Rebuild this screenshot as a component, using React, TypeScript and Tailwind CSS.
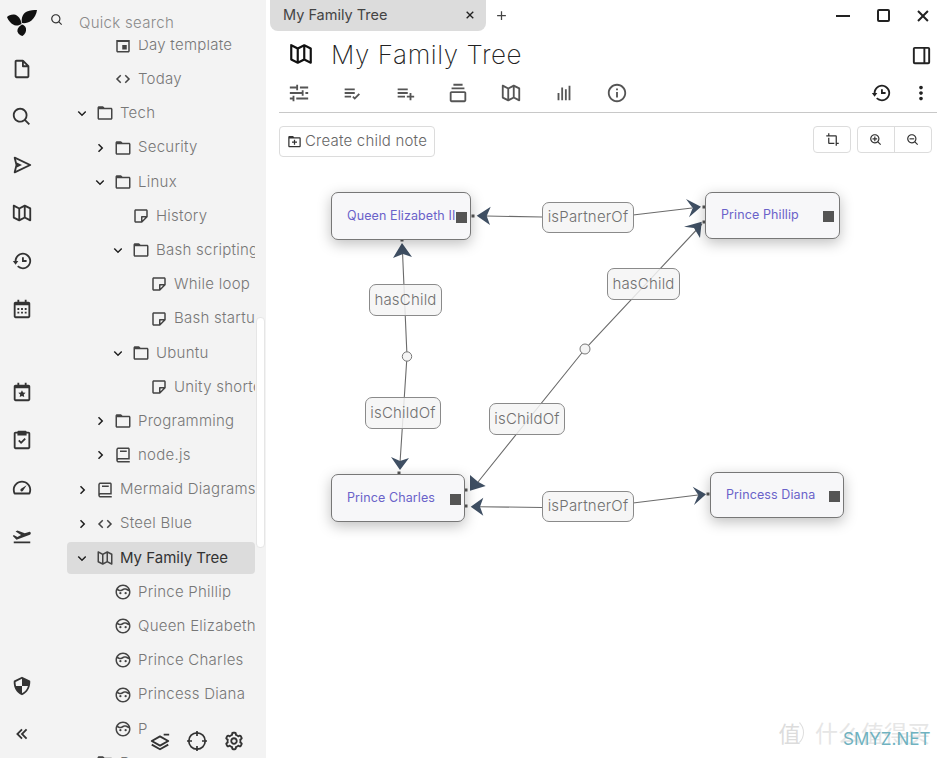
import React from "react";
import {
  BiFileBlank, BiSearch, BiSend, BiMapAlt, BiHistory, BiCalendar, BiCalendarStar, BiTask, BiTachometer,
  BiSolidPlaneTakeOff, BiShieldQuarter, BiChevronsLeft, BiLayerMinus, BiCog, BiFolder, BiNote, BiBook, BiCode,
  BiChevronDown, BiChevronRight, BiFace, BiCalendarEvent, BiSlider, BiListCheck, BiListPlus, BiCollection, BiBarChart,
  BiInfoCircle, BiDockRight, BiDotsVerticalRounded, BiCrop, BiZoomIn, BiZoomOut, BiFolderPlus, BiMinus, BiX, BiPlus,
} from "react-icons/bi";

const font = "font-['Inter','Liberation_Sans',sans-serif]";

function Logo() {
  return (
    <svg width="30" height="26" viewBox="0 0 30 26" className="block">
      <path d="M14.5 14 C14 9 11 5 7 4.5 C4 4.3 1.5 5.5 0 7 C1.5 11 5 15 9 15.5 C11 15.7 13 15 14.5 14 Z" fill="#111" />
      <path d="M15 13 C14 8 16 3 20 1.5 C23 0.3 27 0 30 0 C29.5 4 27.5 8 24.5 10.5 C21.5 12.8 18 13.5 15 13 Z" fill="#111" />
      <path d="M15 14.5 C12 16 10 19 10.5 21.5 C11 24 13.5 25.7 15.5 26 C18 24.5 19.5 21.5 19 18.5 C18.5 16.5 17 15 15 14.5 Z" fill="#111" />
    </svg>
  );
}

function Crosshair() {
  return (
    <svg width="22" height="22" viewBox="0 0 22 22" fill="none" stroke="currentColor" strokeWidth="1.7" className="block">
      <circle cx="11" cy="11" r="8.2" />
      <path d="M11 1v5M11 16v5M1 11h5M16 11h5" />
    </svg>
  );
}

const rail1 = [BiFileBlank, BiSearch, BiSend, BiMapAlt, BiHistory, BiCalendar];
const rail2 = [BiCalendarStar, BiTask, BiTachometer, BiSolidPlaneTakeOff];

function RailIcon({ Icon }: { Icon: React.ComponentType<{ size?: number; className?: string }> }) {
  return (
    <div className="h-[48px] w-full flex items-center justify-center">
      <Icon size={22} className="text-[#333]" />
    </div>
  );
}

type Row = { pad: string; chev?: "d" | "r"; Icon: any; text: string; sel?: boolean };
const rows: Row[] = [
  { pad: "pl-[24px]", Icon: BiCalendarEvent, text: "Day template" },
  { pad: "pl-[24px]", Icon: BiCode, text: "Today" },
  { pad: "pl-[6px]", chev: "d", Icon: BiFolder, text: "Tech" },
  { pad: "pl-[24px]", chev: "r", Icon: BiFolder, text: "Security" },
  { pad: "pl-[24px]", chev: "d", Icon: BiFolder, text: "Linux" },
  { pad: "pl-[42px]", Icon: BiNote, text: "History" },
  { pad: "pl-[42px]", chev: "d", Icon: BiFolder, text: "Bash scripting" },
  { pad: "pl-[60px]", Icon: BiNote, text: "While loop" },
  { pad: "pl-[60px]", Icon: BiNote, text: "Bash startup" },
  { pad: "pl-[42px]", chev: "d", Icon: BiFolder, text: "Ubuntu" },
  { pad: "pl-[60px]", Icon: BiNote, text: "Unity shortcuts" },
  { pad: "pl-[24px]", chev: "r", Icon: BiFolder, text: "Programming" },
  { pad: "pl-[24px]", chev: "r", Icon: BiBook, text: "node.js" },
  { pad: "pl-[6px]", chev: "r", Icon: BiBook, text: "Mermaid Diagrams" },
  { pad: "pl-[6px]", chev: "r", Icon: BiCode, text: "Steel Blue" },
  { pad: "pl-[6px]", chev: "d", Icon: BiMapAlt, text: "My Family Tree", sel: true },
  { pad: "pl-[24px]", Icon: BiFace, text: "Prince Phillip" },
  { pad: "pl-[24px]", Icon: BiFace, text: "Queen Elizabeth II" },
  { pad: "pl-[24px]", Icon: BiFace, text: "Prince Charles" },
  { pad: "pl-[24px]", Icon: BiFace, text: "Princess Diana" },
  { pad: "pl-[24px]", Icon: BiFace, text: "Prince William" },
  { pad: "pl-[6px]", chev: "r", Icon: BiFolder, text: "Books" },
];

function TreeRow({ r }: { r: Row }) {
  return (
    <div className="h-[34.2px] ml-[23px] flex items-center">
      <div className={`h-[32px] w-full flex items-center whitespace-nowrap overflow-hidden rounded ${r.pad} ${r.sel ? "bg-[#dcdcdc] text-[#333]" : "text-[#777]"}`}>
        <span className="w-[18px] shrink-0 flex justify-center text-[#222]">
          {r.chev === "d" && <BiChevronDown size={20} />}
          {r.chev === "r" && <BiChevronRight size={20} />}
        </span>
        <span className="w-[22px] ml-[3px] shrink-0 flex justify-center text-[#444]">
          <r.Icon size={18} />
        </span>
        <span className={`ml-[4px] text-[15px] ${r.sel ? "font-normal tracking-[0px]" : "font-light tracking-[0.25px]"}`}>{r.text}</span>
      </div>
    </div>
  );
}

const toolbar = [BiSlider, BiListCheck, BiListPlus, BiCollection, BiMapAlt, BiBarChart, BiInfoCircle];

function GraphNode({ pos, square, text }: { pos: string; square: string; text: string }) {
  return (
    <div className={`absolute ${pos} rounded-[7px] border border-[#777] bg-[#f7f7f9] shadow-[0_4px_14px_rgba(0,0,0,0.25)] flex items-center pl-[15px] text-[12.5px] tracking-[0.1px] text-[#6a62c9] whitespace-nowrap`}>
      {text}
      <span className={`absolute ${square} w-[11px] h-[11px] bg-[#555]`} />
    </div>
  );
}

function EdgeLabel({ pos, text }: { pos: string; text: string }) {
  return (
    <div className={`absolute ${pos} rounded-[7px] border border-[#8a8a8a] bg-[#f5f5f5]/85 flex items-center justify-center text-[15px] font-light text-[#707070] tracking-[0.2px]`}>
      {text}
    </div>
  );
}

const lines = [
  "402.5,252 407,356 400,463",
  "542,217 486,216",
  "633,215 692,208",
  "702,224 585,349 478,482",
  "542,507.5 480,506.7",
  "633,503 698,495",
];
const arrows = [
  "402,243 412,257 403,254 393,258",
  "400,470 391,457 400,461 409,458",
  "476.7,215.7 490.7,206.7 486.7,216 490,225",
  "701,206.7 686,199 692.7,208 689,217.3",
  "701.7,221.7 684,226.7 694,228 700,238",
  "470,490.7 470,475 478,481.7 485.7,486",
  "470.7,506.7 483.3,497.7 480,506.7 483.3,515.7",
  "706,494.3 692.7,486.7 698.3,495 694,505",
];
const dots = [[402, 240], [473, 216], [704, 207], [704, 222], [708, 494], [399, 473], [466, 490], [466, 506]];

export default function App() {
  return (
    <div className={`${font} w-[941px] h-[758px] flex overflow-hidden bg-white relative`}>
      {/* Left panel */}
      <div className="w-[266px] h-full bg-[#f3f3f3] flex relative shrink-0">
        <div className="w-[44px] h-full flex flex-col items-center shrink-0">
          <div className="h-[45px] w-full flex items-center justify-center">
            <Logo />
          </div>
          {rail1.map((I, i) => <RailIcon key={i} Icon={I} />)}
          <div className="h-[35px] w-full" />
          {rail2.map((I, i) => <RailIcon key={i} Icon={I} />)}
          <div className="mt-auto w-full">
            <RailIcon Icon={BiShieldQuarter} />
            <RailIcon Icon={BiChevronsLeft} />
          </div>
        </div>
        <div className="w-[211px] h-full flex flex-col">
          <div className="h-[40px] pl-[6px] flex items-center gap-[15px] bg-[#f3f3f3] relative z-10 shrink-0 pt-[6px]">
            <BiSearch size={14} className="text-[#333] -mt-[6px]" />
            <span className="text-[15px] font-light text-[#8a8a8a] tracking-[0.3px]">Quick search</span>
          </div>
          <div className="flex-1 overflow-hidden">
            <div className="-mt-[12px]">
              {rows.map((r) => <TreeRow key={r.text} r={r} />)}
            </div>
          </div>
        </div>
        {/* scrollbar */}
        <div className="absolute left-[256px] top-[317px] w-[9px] h-[231px] bg-white border border-[#e6e6e6] rounded-sm" />
        {/* floating sidebar buttons */}
        <div className="absolute left-[147px] top-[716px] w-[108px] h-[42px] bg-[#f3f3f3] flex items-center pl-[2px] gap-[15px] pt-[8px] text-[#333]">
          <BiLayerMinus size={22} />
          <Crosshair />
          <BiCog size={22} />
        </div>
      </div>

      {/* Main */}
      <div className="flex-1 h-full flex flex-col min-w-0">
        <div className="h-[31px] flex items-start shrink-0">
          <div className="ml-[4px] w-[216px] h-[31px] bg-[#dcdcdc] rounded-b-lg flex items-center pl-[13px] pr-[8px] pb-[2px] text-[14.5px] text-[#444]">
            <span className="flex-1">My Family Tree</span>
            <BiX size={16} className="text-[#222]" />
          </div>
          <BiPlus size={15} className="ml-[8px] mt-[8px] text-[#444]" />
          <div className="ml-auto flex items-center h-[31px] text-[#222] pr-[6px] gap-[15px]">
            <BiMinus size={24} />
            <span className="w-[26px] flex justify-center"><span className="w-[13px] h-[13px] rounded-[2px] border-2 border-[#222]" /></span>
            <BiX size={24} />
          </div>
        </div>
        <div className="h-[44px] flex items-center pl-[22px] pr-[8px] pt-[2px] shrink-0">
          <BiMapAlt size={26} className="text-[#111]" />
          <span className="ml-[17px] text-[26px] font-extralight text-[#222] tracking-[0.6px]">My Family Tree</span>
          <BiDockRight size={23} className="ml-auto mt-[2px] text-[#222]" />
        </div>
        <div className="h-[38px] mx-[13px] mr-[4px] border-b border-[#c8c8c8] flex items-center pl-[9px] pr-[5px] pb-[2px] shrink-0">
          {toolbar.map((I, i) => (
            <span key={i} className="w-[53px] flex justify-start text-[#555]"><I size={22} /></span>
          ))}
          <BiHistory size={22} className="ml-auto text-[#222]" />
          <BiDotsVerticalRounded size={22} className="ml-[18px] text-[#222]" />
        </div>
        <div className="h-[47px] pt-[13px] pl-[13px] pr-[9px] flex items-start shrink-0">
          <button className="h-[31px] w-[156px] rounded border border-[#dcdcdc] flex items-center pl-[7px] gap-[3px] text-[15px] tracking-[0.2px] font-light text-[#666] whitespace-nowrap">
            <BiFolderPlus size={15} className="text-[#333]" />
            Create child note
          </button>
          <button className="ml-auto h-[27px] w-[38px] rounded border border-[#dcdcdc] flex items-center justify-center text-[#333]">
            <BiCrop size={15} />
          </button>
          <div className="ml-[6px] h-[27px] w-[75px] rounded border border-[#dcdcdc] flex items-center text-[#333]">
            <span className="flex-1 h-full flex items-center justify-center border-r border-[#dcdcdc]"><BiZoomIn size={14} /></span>
            <span className="flex-1 flex items-center justify-center"><BiZoomOut size={14} /></span>
          </div>
        </div>

        {/* Relation map canvas: node positions are the content */}
        <div className="flex-1 relative">
          <svg className="absolute inset-0 w-full h-full" viewBox="266 160 675 598">
            {lines.map((p) => <polyline key={p} points={p} fill="none" stroke="#6b6b6b" strokeWidth="1.1" />)}
            {arrows.map((p) => <polygon key={p} points={p} fill="#3f4f63" />)}
            {dots.map(([x, y]) => <rect key={`${x}-${y}`} x={x - 1.5} y={y - 1.5} width="3" height="3" fill="#555" />)}
            <circle cx="407" cy="356.5" r="4.7" fill="#f5f5f5" stroke="#777" />
            <circle cx="585" cy="349" r="5" fill="#f5f5f5" stroke="#777" />
          </svg>
          <GraphNode pos="left-[65px] top-[32px] w-[140px] h-[48px]" square="left-[124px] top-[19px]" text="Queen Elizabeth II" />
          <GraphNode pos="left-[439px] top-[32px] w-[135px] h-[47px]" square="left-[117px] top-[18px]" text="Prince Phillip" />
          <GraphNode pos="left-[444px] top-[312px] w-[134px] h-[46px]" square="left-[118px] top-[18px]" text="Princess Diana" />
          <GraphNode pos="left-[65px] top-[314px] w-[134px] h-[48px]" square="left-[118px] top-[19px]" text="Prince Charles" />
          <EdgeLabel pos="left-[276px] top-[42px] w-[92px] h-[31px]" text="isPartnerOf" />
          <EdgeLabel pos="left-[103px] top-[124px] w-[73px] h-[32px]" text="hasChild" />
          <EdgeLabel pos="left-[341px] top-[108px] w-[73px] h-[32px]" text="hasChild" />
          <EdgeLabel pos="left-[99px] top-[237px] w-[76px] h-[32px]" text="isChildOf" />
          <EdgeLabel pos="left-[223px] top-[243px] w-[76px] h-[32px]" text="isChildOf" />
          <EdgeLabel pos="left-[276px] top-[331px] w-[92px] h-[31px]" text="isPartnerOf" />
        </div>
      </div>

      {/* Watermark over the picture */}
      <div className="absolute left-[775px] top-[718px] flex items-center font-['Noto_Sans_CJK_SC',sans-serif] text-[#e6e6e6] pointer-events-none">
        <span className="w-[29px] h-[29px] rounded-full border border-transparent border-r-[#dedede] flex items-center justify-center text-[22px] text-[#dcdcdc]">值</span>
        <span className="ml-[11px] text-[23px] leading-none tracking-[0px] whitespace-nowrap">什么值得买</span>
      </div>
      <div className="absolute left-[843px] top-[729px] text-[17px] leading-[20px] text-[#6fb2c0] pointer-events-none">SMYZ.NET</div>
    </div>
  );
}
